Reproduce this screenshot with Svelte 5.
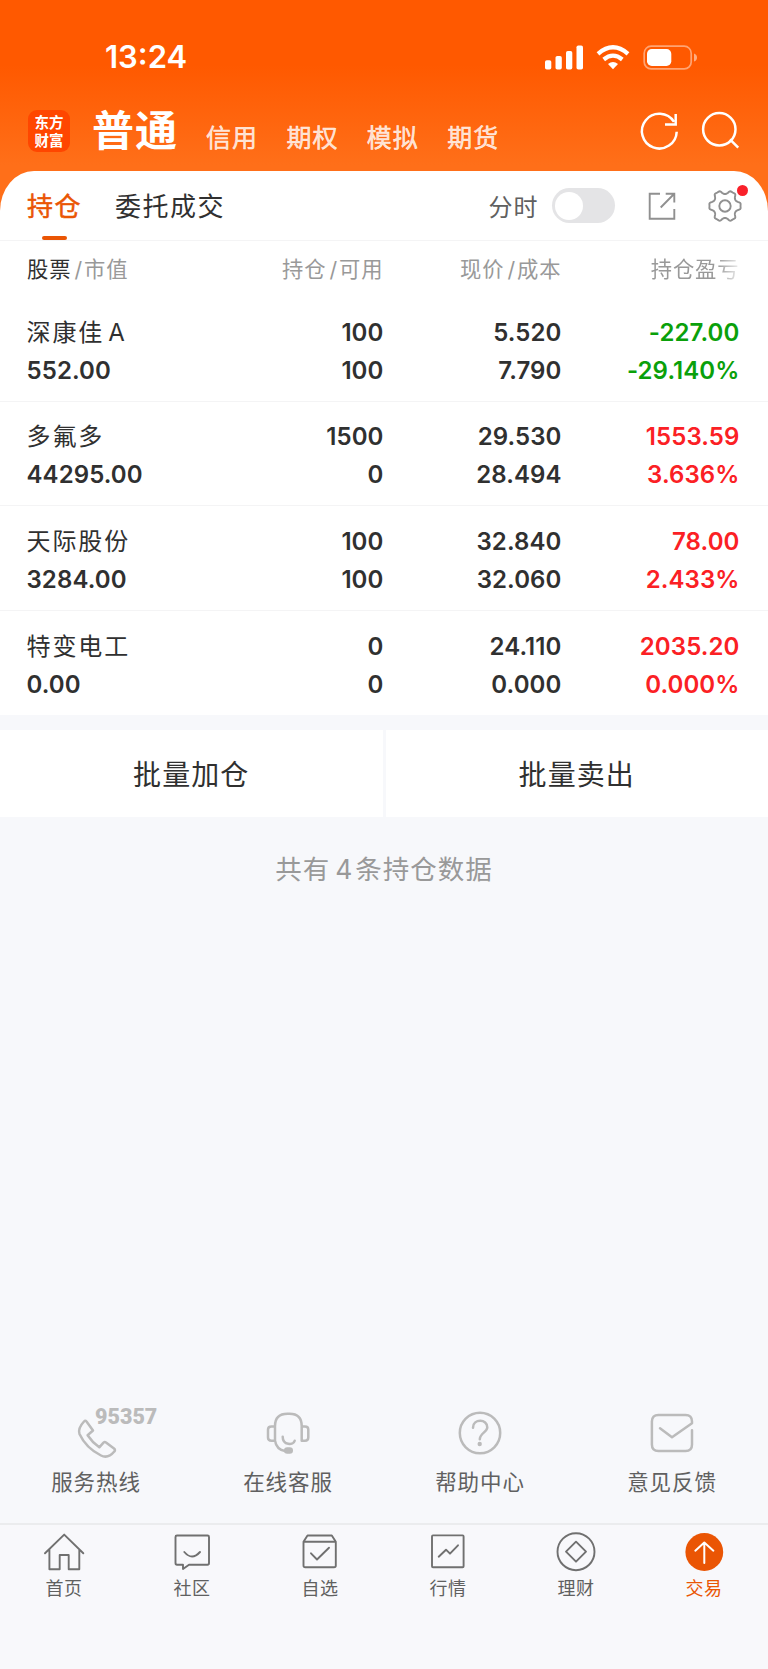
<script lang="ts">
  type Holding = {
    name: string;
    suffix?: string;
    value: string;
    amount: string;
    usable: string;
    price: string;
    cost: string;
    profit: string;
    rate: string;
  };

  const markets = ['信用', '期权', '模拟', '期货'];

  const holdings: Holding[] = [
    { name: '深康佳', suffix: 'A', value: '552.00', amount: '100', usable: '100', price: '5.520', cost: '7.790', profit: '-227.00', rate: '-29.140%' },
    { name: '多氟多', value: '44295.00', amount: '1500', usable: '0', price: '29.530', cost: '28.494', profit: '1553.59', rate: '3.636%' },
    { name: '天际股份', value: '3284.00', amount: '100', usable: '100', price: '32.840', cost: '32.060', profit: '78.00', rate: '2.433%' },
    { name: '特变电工', value: '0.00', amount: '0', usable: '0', price: '24.110', cost: '0.000', profit: '2035.20', rate: '0.000%' },
  ];

  const services = [
    { id: 'phone', label: '服务热线' },
    { id: 'headset', label: '在线客服' },
    { id: 'help', label: '帮助中心' },
    { id: 'mail', label: '意见反馈' },
  ];

  const tabs = [
    { id: 'home', label: '首页' },
    { id: 'chat', label: '社区' },
    { id: 'picks', label: '自选' },
    { id: 'quotes', label: '行情' },
    { id: 'wealth', label: '理财' },
    { id: 'trade', label: '交易' },
  ];

  let activeTab = $state('trade');
  let intraday = $state(false);

  // six-lobed outline of the settings gear
  const gear = Array.from({ length: 120 }, (_, i) => {
    const a = (i * Math.PI) / 60;
    // lobes stay flat on the outside, with straight flanks between them
    const r = (14.1 + 1.9 * Math.tanh(1.9 * Math.cos(6 * a))) * (1 - 0.025 * Math.cos(12 * a));
    return `${(17 + r * Math.cos(a)).toFixed(2)},${(17 + r * Math.sin(a)).toFixed(2)}`;
  }).join(' ');
</script>

<div class="screen">
  <header>
    <div class="status">
      <span class="clock">13:24</span>
      <svg class="status-icons" width="154" height="28" viewBox="0 0 154 28">
        <g fill="#fff">
          <rect x="1" y="17.3" width="6.3" height="9.2" rx="1.8" />
          <rect x="11.5" y="13" width="6.3" height="13.5" rx="1.8" />
          <rect x="22" y="8" width="6.3" height="18.5" rx="1.8" />
          <rect x="32.5" y="2.4" width="6.5" height="24.1" rx="1.8" />
          <path d="M69 26.2l-5-5.1q5-4.2 10 0z" />
        </g>
        <g fill="none" stroke="#fff" stroke-width="4.2">
          <path d="M54 10.8q15-13 30 0" />
          <path d="M59.7 16.5q9.3-7.6 18.6 0" />
        </g>
        <rect x="100.2" y="3.2" width="47" height="22.7" rx="7" fill="none" stroke="#fff" stroke-opacity=".45" stroke-width="1.7" />
        <rect x="103" y="6" width="24.3" height="17" rx="4.8" fill="#fff" />
        <path d="M150 10.5q3 1 3 4t-3 4z" fill="#fff" fill-opacity=".5" />
      </svg>
    </div>
    <nav class="markets">
      <div class="logo"><span>东方</span><span>财富</span></div>
      <strong>普通</strong>
      {#each markets as market}
        <span class="market">{market}</span>
      {/each}
      <div class="header-icons">
        <svg width="42" height="42" viewBox="0 0 42 42">
          <path d="M37.7 21.7A17.4 17.4 0 1 1 35 11.8M36.7 4v10.5H26" />
        </svg>
        <svg width="42" height="42" viewBox="0 0 42 42">
          <circle cx="20.3" cy="19.3" r="16.2" />
          <path d="M31 29.3l8.2 8.4" />
        </svg>
      </div>
    </nav>
  </header>

  <main>
    <div class="tabs">
      <button class="tab active">持仓</button>
      <button class="tab">委托成交</button>
      <div class="tools">
        <span class="tools-label">分时</span>
        <button class="switch" class:on={intraday} aria-label="分时" onclick={() => (intraday = !intraday)}>
          <span class="thumb"></span>
        </button>
        <svg class="export" width="28" height="28" viewBox="0 0 28 28">
          <path d="M12 1.7H1.7V26.7H26.3V17M17.7 1.7H26.3V10.5M26 2L12.7 15.5" />
        </svg>
        <div class="gear">
          <svg width="34" height="34" viewBox="0 0 34 34">
            <polygon points={gear} />
            <circle cx="17" cy="17" r="5.7" />
          </svg>
          <i class="dot"></i>
        </div>
      </div>
    </div>

    <div class="grid thead">
      <span><b>股票</b><em>/</em>市值</span>
      <span>持仓<em>/</em>可用</span>
      <span>现价<em>/</em>成本</span>
      <span class="fade">持仓盈亏</span>
    </div>

    {#each holdings as h}
      <div class="grid row">
        <div><span class="name">{h.name}{#if h.suffix}<i>{h.suffix}</i>{/if}</span><span>{h.value}</span></div>
        <div><span>{h.amount}</span><span>{h.usable}</span></div>
        <div><span>{h.price}</span><span>{h.cost}</span></div>
        <div class="gain" class:loss={h.profit.startsWith('-')}><span>{h.profit}</span><span>{h.rate}</span></div>
      </div>
    {/each}
  </main>

  <div class="batch">
    <button>批量加仓</button>
    <button>批量卖出</button>
  </div>

  <p class="summary">共有<span>4</span>条持仓数据</p>

  <section class="services">
    {#each services as s}
      <div class="service">
        <svg width="48" height="48" viewBox="0 0 48 48">
          {#if s.id === 'phone'}
            <path d="M12 11.5Q13.3 10 14.5 11.5L21 20.5L15.6 25.2Q20 32 27.3 37.3L31.5 32.6Q32.7 31.6 34 32.5L42 38.5Q43.8 40 42.3 41.5Q36 49 29 45.5Q14 38 7.5 24Q5.5 18.5 12 11.5Z" />
          {:else if s.id === 'headset'}
            <path d="M11 31V16Q11 3.7 23.5 3.7H25.5Q37.7 3.7 37.7 16V30.7H41Q44.3 30.7 44.3 27.5V19.5Q44.3 16.5 41 16.5H37.7M11 16.5H7.5Q4 16.5 4 19.5V27.5Q4 30.7 7.5 30.7H11Q12.5 39.5 21 41M18.7 26.7C18.7 35.5 29.5 35.5 30.7 30.7" />
            <rect class="solid" x="20" y="37.3" width="9" height="6.4" rx="3.2" />
          {:else if s.id === 'help'}
            <circle cx="24" cy="23" r="20.2" />
            <path d="M17 17.7C17 8.5 31.5 8.5 31.3 17.5C31.2 22 24 23 23.8 29.2" />
            <circle class="solid" cx="23.7" cy="34" r="2.2" />
          {:else}
            <path d="M12 18.3L24 27.3L44 13.3V11.5Q44 4.9 37.5 4.9H10.5Q3.9 4.9 3.9 11.5V34.5Q3.9 41.1 10.5 41.1H37.5Q44 41.1 44 34.5V20.3" />
          {/if}
        </svg>
        {#if s.id === 'phone'}<span class="number">95357</span>{/if}
        <span class="label">{s.label}</span>
      </div>
    {/each}
  </section>

  <nav class="tabbar">
    {#each tabs as t}
      <button class:current={activeTab === t.id} onclick={() => (activeTab = t.id)}>
        <svg width="44" height="44" viewBox="0 0 44 44">
          {#if t.id === 'home'}
            <path d="M3 23.3L22.2 4.6L41.3 23.3M7.4 19.5V39.3H17.7V25H26.7V39.3H37.3V19.5" />
          {:else if t.id === 'chat'}
            <path d="M7 5.5H37.5Q39 5.5 39 7V33Q39 34.7 37.5 34.7H19L13 39V34.7H7Q5.5 34.7 5.5 33V7Q5.5 5.5 7 5.5ZM14.3 22Q22 31 30 22" />
          {:else if t.id === 'picks'}
            <path d="M5.5 11.7V35.5Q5.5 37.3 7.3 37.3H36Q37.8 37.3 37.8 35.5V11.7ZM5.5 11.7L9.5 5.5H33.8L37.8 11.7M13 23.3L19 29.5L31 17.7" />
          {:else if t.id === 'quotes'}
            <rect x="6" y="5.4" width="31.6" height="31.9" rx="1" />
            <path d="M12.7 26.7L20 19.7L24 23.7L32 15.3" />
          {:else if t.id === 'wealth'}
            <circle cx="22" cy="21.7" r="18.5" />
            <path d="M22 11.7L32 21.7L22 31.7L12 21.7Z" />
          {:else}
            <circle class="disc" cx="22.3" cy="22" r="18.9" />
            <path class="arrow" d="M22.3 33V12.7M13.3 20.7L22.3 12.5L31.4 20.7" />
          {/if}
        </svg>
        <span>{t.label}</span>
      </button>
    {/each}
  </nav>
</div>

<style>
  :global(body) {
    margin: 0;
    background: #f7f8fa;
  }

  .screen {
    display: flex;
    flex-direction: column;
    width: 768px;
    height: 1669px;
    overflow: hidden;
    background: #f7f8fb;
    color: #303030;
    font-family: Inter, 'Noto Sans CJK SC', sans-serif;
  }

  button {
    padding: 0;
    border: 0;
    background: none;
    color: inherit;
    font: inherit;
    letter-spacing: inherit;
  }

  svg {
    display: block;
    flex-shrink: 0;
    overflow: visible;
    fill: none;
    stroke-linejoin: round;
  }

  em,
  i {
    font-style: normal;
  }

  header {
    flex-shrink: 0;
    height: 212px;
    box-sizing: border-box;
    background: linear-gradient(#ff5900 0, #ff5900 65px, #ff6f19 165px);
    color: #fff;
  }

  .status {
    display: flex;
    justify-content: space-between;
    align-items: center;
    height: 30px;
    padding: 42px 70px 0 105px;
  }

  .clock {
    font-size: 31px;
    font-weight: 600;
    line-height: 30px;
  }

  .markets {
    display: flex;
    height: 42px;
    padding: 38px 27px 0 28px;
  }

  .logo {
    display: flex;
    flex-direction: column;
    align-items: center;
    justify-content: center;
    width: 42px;
    height: 42px;
    border-radius: 9px;
    background: #ff4600;
    font-family: 'Noto Sans CJK SC', sans-serif;
    font-size: 14.5px;
    font-weight: 700;
    line-height: 18px;
  }

  strong {
    width: 114px;
    margin-left: 22px;
    font-size: 42px;
    line-height: 42px;
    letter-spacing: 1px;
  }

  .market {
    width: 80.4px;
    padding-top: 13px;
    color: rgba(255, 255, 255, 0.8);
    font-size: 25px;
    line-height: 30px;
    letter-spacing: 1px;
    white-space: nowrap;
    -webkit-text-stroke: 0.5px;
  }

  .header-icons {
    display: flex;
    gap: 18px;
    margin-left: auto;
    stroke: #fff;
    stroke-width: 2.5;
  }

  .header-icons svg {
    stroke-linejoin: miter;
  }

  main {
    flex-shrink: 0;
    margin-top: -41px;
    border-radius: 34px 34px 0 0 / 40px 40px 0 0;
    background: #fff;
  }

  .tabs {
    display: flex;
    height: 69px;
    padding-left: 27px;
    border-bottom: 1px solid #f4f4f5;
  }

  .tab {
    position: relative;
    margin-right: 33px;
    padding-top: 2px;
    font-size: 26px;
    line-height: 67px;
    letter-spacing: 1.5px;
  }

  .tab.active {
    color: #ea5504;
    -webkit-text-stroke: 0.5px;
  }

  .tab.active::after {
    content: '';
    position: absolute;
    left: 15px;
    bottom: 0;
    width: 25px;
    height: 4.5px;
    border-radius: 2px;
    background: #ea5504;
  }

  .tools {
    display: flex;
    align-items: center;
    margin-left: auto;
    padding-right: 26.5px;
    stroke: #909090;
    stroke-width: 1.9;
  }

  .tools-label {
    margin-right: 13px;
    color: #606060;
    font-size: 24px;
    letter-spacing: 1px;
  }

  .switch {
    display: flex;
    width: 63px;
    height: 35px;
    box-sizing: border-box;
    padding: 3.5px;
    border-radius: 18px;
    background: #e4e4e6;
  }

  .switch.on {
    justify-content: flex-end;
    background: #ea5504;
  }

  .thumb {
    width: 28px;
    height: 28px;
    border-radius: 50%;
    background: #fff;
  }

  .export {
    margin: 0 32px 0 33px;
    stroke-linejoin: miter;
  }

  .gear {
    position: relative;
  }

  .dot {
    position: absolute;
    top: -4px;
    right: -6px;
    width: 11px;
    height: 11px;
    border-radius: 50%;
    background: #f9202a;
  }

  .grid {
    display: grid;
    grid-template-columns: 200px 156.5px 178px 178px;
    padding-left: 27px;
    text-align: right;
  }

  .grid > :first-child {
    text-align: left;
  }

  .thead {
    height: 56px;
    color: #999;
    font-size: 21.3px;
    line-height: 57px;
    letter-spacing: 0.9px;
  }

  .thead b {
    color: #303030;
    font-weight: 400;
  }

  .thead em {
    margin: 0 1px 0 3px;
  }

  .fade {
    mask-image: linear-gradient(to right, #000 155px, transparent 182px);
  }

  .row {
    height: 103.7px;
    border-bottom: 1px solid #f4f4f5;
    font-size: 24px;
    font-weight: 600;
    letter-spacing: 0.1px;
  }

  .row:last-child {
    border-bottom-color: #f7f8fb;
  }

  .row span {
    display: block;
    height: 37.8px;
    line-height: 38px;
  }

  .row div {
    padding-top: 16.8px;
  }

  .row > :first-child {
    margin-left: -0.5px;
  }

  .row .name {
    font-weight: 400;
    letter-spacing: 1.9px;
  }

  .name i {
    margin-left: 4px;
  }

  .gain {
    color: #fb2024;
  }

  .gain.loss {
    color: #0aa00a;
  }

  .batch {
    display: flex;
    flex-shrink: 0;
    gap: 3px;
    height: 87.5px;
    margin-top: 14px;
  }

  .batch button {
    flex: 1;
    padding-bottom: 2px;
    background: #fff;
    font-size: 28px;
    letter-spacing: 1.1px;
  }

  .summary {
    margin: 32px 0 0;
    color: #999;
    font-size: 26.5px;
    line-height: 40px;
    letter-spacing: 1px;
    text-align: center;
  }

  .summary span {
    margin: 0 2px 0 5px;
  }

  .services {
    display: grid;
    grid-template-columns: repeat(4, 1fr);
    margin-top: auto;
    padding-bottom: 25px;
  }

  .service {
    position: relative;
    display: flex;
    flex-direction: column;
    align-items: center;
    stroke: #bbb;
    stroke-width: 2.5;
    stroke-linecap: round;
  }

  .service .solid {
    fill: #bbb;
    stroke: none;
  }

  .number {
    position: absolute;
    left: 95px;
    top: -4px;
    color: #bbb;
    font-family: Roboto, sans-serif;
    font-size: 21.5px;
    font-weight: 900;
    line-height: 22px;
  }

  .label {
    margin-top: 8px;
    color: #606060;
    font-size: 21.5px;
    line-height: 32px;
    letter-spacing: 0.9px;
  }

  .tabbar {
    display: grid;
    flex-shrink: 0;
    grid-template-columns: repeat(6, 1fr);
    height: 146px;
    box-sizing: border-box;
    padding-top: 5px;
    border-top: 2px solid #ebecee;
    background: #f8f8fb;
  }

  .tabbar button {
    display: flex;
    flex-direction: column;
    align-items: center;
    color: #606060;
    font-size: 18px;
    line-height: 29px;
    letter-spacing: 0.6px;
    stroke: #707070;
    stroke-width: 1.9;
    stroke-linecap: round;
  }

  .tabbar .current {
    color: #ea5504;
  }

  .disc {
    fill: #ea5504;
    stroke: none;
  }

  .arrow {
    stroke: #fff;
    stroke-width: 2;
  }
</style>
